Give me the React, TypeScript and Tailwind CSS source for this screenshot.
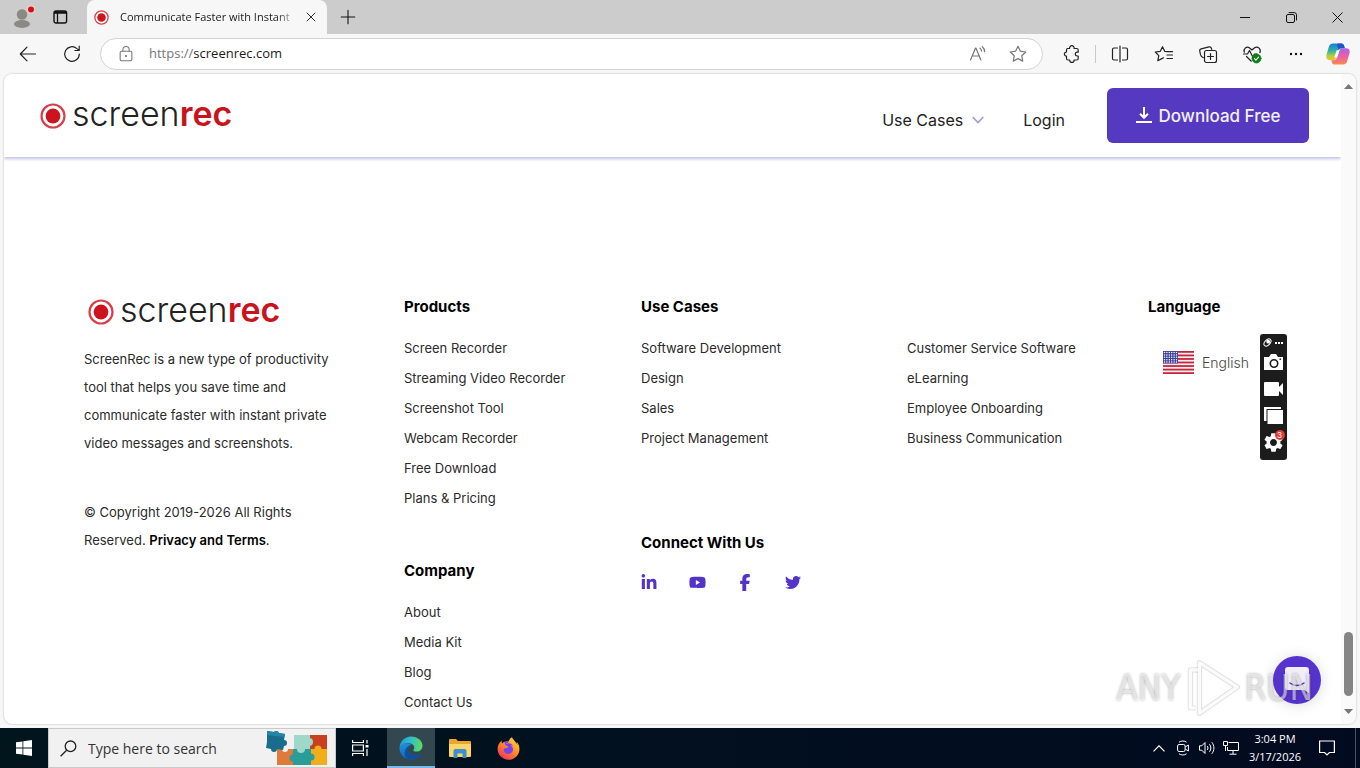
import React from "react";
import {
  FaFacebookF,
  FaFirefoxBrowser,
  FaLinkedinIn,
  FaTwitter,
  FaYoutube,
} from "react-icons/fa6";
import { MdSettings } from "react-icons/md";

type LineIconProps = {
  size?: number;
  className?: string;
  strokeWidth?: number;
  children: React.ReactNode;
};

function LineIcon({ size = 20, className, strokeWidth = 1.2, children }: LineIconProps) {
  return (
    <svg
      width={size}
      height={size}
      viewBox="0 0 20 20"
      fill="none"
      stroke="currentColor"
      strokeWidth={strokeWidth}
      strokeLinecap="round"
      strokeLinejoin="round"
      className={className}
      aria-hidden="true"
    >
      {children}
    </svg>
  );
}

function RecordMark({ size }: { size: number }) {
  return (
    <svg width={size} height={size} viewBox="0 0 26 26" aria-hidden="true">
      <circle cx="13" cy="13" r="11.5" fill="#fff" stroke="#d5404c" strokeWidth="2.200" />
      <circle cx="13" cy="13" r="7.400" fill="#cc141c" />
    </svg>
  );
}

function Logo() {
  return (
    <a href="#home" className="flex items-center gap-[6px]">
      <RecordMark size={26} />
      <span className="text-[34px] leading-[34px] font-light text-[#222] -mt-[4px]">
        screen<span className="font-semibold text-[#c8141d]">rec</span>
      </span>
    </a>
  );
}

function TitleBar() {
  return (
    <div className="flex h-[34px] items-stretch bg-[#cccccc]">
      <div className="flex w-[87px] items-center pl-[12px] gap-[18px]">
        <button aria-label="Profile">
          <svg width="23" height="24" viewBox="0 0 23 24" aria-hidden="true">
            <circle cx="10" cy="9.500" r="5.200" fill="#8b8886" />
            <ellipse cx="10" cy="19" rx="8" ry="3.900" fill="#8b8886" />
            <circle cx="19" cy="4.500" r="4.500" fill="#e6cfcf" />
            <circle cx="19" cy="4.500" r="3" fill="#d90f17" />
          </svg>
        </button>
        <button aria-label="Tab actions">
          <svg width="15" height="14" viewBox="0 0 15 14" fill="none" stroke="#111" aria-hidden="true">
            <rect x="1" y="1" width="12.600" height="12" rx="2" strokeWidth="1.400" />
            <path d="M1 2.500h12.600" strokeWidth="2.500" />
            <path d="M4.500 3v10" strokeWidth="1.300" />
          </svg>
        </button>
      </div>
      <div className="flex w-[240px] items-center rounded-t-lg bg-[#f7f7f7] pl-[7px] pr-[6px]">
        <RecordMark size={15} />
        <span className="ml-[11px] w-[178px] whitespace-nowrap text-[11px] text-[#1b1b1b] [mask-image:linear-gradient(to_right,black_88%,transparent)]">
          Communicate Faster with Instant
        </span>
        <button aria-label="Close tab" className="ml-[3px] flex size-[20px] items-center justify-center text-[#222]">
          <LineIcon size={16}>
            <path d="M5 5l10 10M15 5L5 15" />
          </LineIcon>
        </button>
      </div>
      <button aria-label="New tab" className="flex w-[42px] items-center justify-center text-[#111]">
        <LineIcon size={18}>
          <path d="M10 2.500v15M2.500 10h15" />
        </LineIcon>
      </button>
      <div className="flex-1" />
      <div className="flex text-[#111]">
        <button aria-label="Minimize" className="flex w-[46px] items-center justify-center">
          <svg width="10" height="10" viewBox="0 0 10 10" stroke="currentColor" aria-hidden="true">
            <path d="M0 5.500h10" />
          </svg>
        </button>
        <button aria-label="Restore" className="flex w-[46px] items-center justify-center">
          <svg width="11" height="11" viewBox="0 0 11 11" fill="none" stroke="currentColor" aria-hidden="true">
            <rect x="0.5" y="2.5" width="8" height="8" rx="1.500" />
            <path d="M2.700.6h5.600A2.200 2.200 0 0 1 10.500 2.800v5.600" />
          </svg>
        </button>
        <button aria-label="Close window" className="flex w-[46px] items-center justify-center">
          <svg width="11" height="11" viewBox="0 0 11 11" stroke="currentColor" aria-hidden="true">
            <path d="M.5.5l10 10M10.500 .5l-10 10" />
          </svg>
        </button>
      </div>
    </div>
  );
}

function ToolButton({ label, children }: { label: string; children: React.ReactNode }) {
  return (
    <button aria-label={label} className="flex h-full w-[44px] items-center justify-center text-[#222]">
      {children}
    </button>
  );
}

function CopilotIcon() {
  return (
    <svg width="24" height="22" viewBox="0 0 24 22" aria-hidden="true">
      <defs>
        <linearGradient id="cpA" x1="0" y1="0" x2="0" y2="1">
          <stop offset="0" stopColor="#1a7be0" />
          <stop offset="0.45" stopColor="#2fb6a0" />
          <stop offset="0.75" stopColor="#b7cf3a" />
          <stop offset="1" stopColor="#f6c12b" />
        </linearGradient>
        <linearGradient id="cpB" x1="0" y1="0" x2="0" y2="1">
          <stop offset="0" stopColor="#a763e8" />
          <stop offset="0.5" stopColor="#ea5fa8" />
          <stop offset="1" stopColor="#fb8a4c" />
        </linearGradient>
      </defs>
      <path d="M7 .5h8.500c1.500 0 2.200 1 2.700 2.600l.5 2.100h-3.200c-1.800 0-2.700 1-3.200 2.600L9.900 15c-.4 1.500-1 2.200-2.200 2.200H4C.8 17.200-.3 15 .6 11.500L2.700 4.300C3.400 1.800 4.700.5 7 .5z" fill="url(#cpA)" />
      <path d="M12.200.5h3.300c1.500 0 2.200 1 2.700 2.600l.6 2.100h-3.300c-1.400 0-2.200.7-2.700 1.700L11.200 2.700C11 1.500 11.300.5 12.200.5z" fill="#1c55c8" />
      <path d="M17 21.500H8.500c-1.500 0-2.200-1-2.700-2.600l-.5-1.700h2.400c1.800 0 2.700-1 3.200-2.600L13.500 7.400c.4-1.500 1-2.200 2.200-2.200H20c3.200 0 4.300 2 3.400 5.300l-2.100 7.200c-.7 2.500-2 3.800-4.300 3.800z" fill="url(#cpB)" />
      <path d="M10.600 7.200h2.900l-2.300 7.400H8.300z" fill="#fff" />
    </svg>
  );
}

function Toolbar() {
  return (
    <div className="flex h-[40px] items-center bg-[#f7f7f7] pl-[6px]">
      <ToolButton label="Back">
        <LineIcon size={20}>
          <path d="M17.500 10H2.500M9 3.200L2.300 10 9 16.800" />
        </LineIcon>
      </ToolButton>
      <ToolButton label="Refresh">
        <LineIcon size={20}>
          <path d="M17.300 10a7.300 7.300 0 1 1-2.400-5.400L17 6.400M17.200 2.200v4.300h-4.300" />
        </LineIcon>
      </ToolButton>
      <div className="ml-[6px] flex h-[32px] flex-1 items-center rounded-full border border-[#d3d3d3] bg-white pl-[16px] pr-[14px] text-[#777]">
        <LineIcon size={18}>
          <rect x="3.500" y="7" width="13" height="10.500" rx="1.600" />
          <path d="M6.500 7V5.200a3.500 3.500 0 0 1 7 0V7" />
          <circle cx="10" cy="12.200" r=".6" fill="currentColor" />
        </LineIcon>
        <label htmlFor="address" className="ml-[14px] text-[13px] text-[#777]">
          https://
        </label>
        <input
          id="address"
          defaultValue="screenrec.com"
          className="min-w-0 flex-1 bg-transparent text-[13px] text-[#1b1b1b] outline-none"
        />
        <button aria-label="Read aloud" className="mr-[20px]">
          <LineIcon size={20} strokeWidth={1.2}>
            <path d="M2.500 16L7.500 4h.4l5 12M4.300 12h6.800M12 4.200c1 .7 1.500 1.700 1.700 3M14.300 2.700c1.400 1.200 2.200 2.800 2.400 4.900" />
          </LineIcon>
        </button>
        <button aria-label="Add to favorites">
          <LineIcon size={20}>
            <path d="M10 2.300l2.400 4.900 5.300.8-3.900 3.800.9 5.300-4.700-2.500-4.700 2.500.9-5.300L2.300 8l5.300-.8z" />
          </LineIcon>
        </button>
      </div>
      <div className="ml-[7px] flex h-full items-center">
        <ToolButton label="Extensions">
          <LineIcon size={20}>
            <path d="M5.500 4.500h2.100a2.300 2.300 0 1 1 4.500 0h2.600A1.500 1.500 0 0 1 16.200 6v2.200h-1a1.900 1.900 0 1 0 0 3.800h1v2.500a1.500 1.500 0 0 1-1.500 1.500h-2.600v.2a2.200 2.200 0 0 1-4.400 0V16H6a1.500 1.500 0 0 1-1.500-1.500v-2.300a2.100 2.100 0 1 1 0-4.200V6a1.500 1.500 0 0 1 1-1.500z" />
          </LineIcon>
        </ToolButton>
        <div className="mx-[1px] h-[18px] w-[2px] border-l border-[#c8c8c8]" />
        <ToolButton label="Split screen">
          <LineIcon size={20}>
            <path d="M10 2v16M7.500 4H4a1.500 1.500 0 0 0-1.500 1.500v9A1.500 1.500 0 0 0 4 16h3.500M12.500 4H16a1.500 1.500 0 0 1 1.500 1.500v9A1.500 1.500 0 0 1 16 16h-3.500" />
          </LineIcon>
        </ToolButton>
        <ToolButton label="Favorites">
          <LineIcon size={20}>
            <path d="M9.500 13.800l-1.200.6-4.500 2.300 1-5L1.300 8l5-.7 2.200-4.600 2.200 4.600 3.300.4M13 7.700h5.500M13 11h5.500M13 14.500h5.500" />
          </LineIcon>
        </ToolButton>
        <ToolButton label="Collections">
          <LineIcon size={20}>
            <path d="M5.200 13.600l-.7-.4C3.300 12.700 3 12 2.600 10.900L1.800 7.300C1.500 6 2 5.200 3.200 4.900l7.800-2c1.300-.3 2 .1 2.400 1.400l.3 1" />
            <rect x="6.500" y="6.500" width="12" height="12" rx="2" />
            <path d="M12.500 9.500v6M9.500 12.500h6" />
          </LineIcon>
        </ToolButton>
        <ToolButton label="Browser essentials">
          <LineIcon size={20}>
            <path d="M2.300 8.200C1.200 4.600 4.600 2.300 7.300 3.700L10 6l2.600-2.300c3.500-1.600 6.700 1.200 5.300 5M4.500 12.500l4.800 4.700M1.500 10h4l2-3.500 3.300 6.500 1.700-3h2.500" />
            <circle cx="14.500" cy="14.500" r="4.500" fill="#0b8015" stroke="#0b8015" strokeWidth=".8" />
            <path d="M12.500 14.700l1.400 1.400 2.700-2.900" stroke="#fff" />
          </LineIcon>
        </ToolButton>
        <ToolButton label="More">
          <svg width="14" height="4" viewBox="0 0 14 4" fill="#111" aria-hidden="true">
            <circle cx="2" cy="2" r="1.200" />
            <circle cx="7" cy="2" r="1.200" />
            <circle cx="12" cy="2" r="1.200" />
          </svg>
        </ToolButton>
        <button aria-label="Copilot" className="flex w-[42px] items-center justify-center pr-[2px]">
          <CopilotIcon />
        </button>
      </div>
    </div>
  );
}

function SiteHeader() {
  return (
    <header className="flex h-[83px] shrink-0 items-center justify-between bg-white pl-[36px] pr-[32px] shadow-[0_2px_3px_rgba(83,76,190,0.35)]">
      <Logo />
      <nav className="flex items-center text-[16px] text-[#222]">
        <button className="flex items-center gap-[9px] pt-[8px]">
          Use Cases
          <svg width="12" height="8" viewBox="0 0 12 8" fill="none" stroke="#a79be6" strokeWidth="1.800" aria-hidden="true">
            <path d="M.7 1L6 6.500 11.300 1" />
          </svg>
        </button>
        <a href="#login" className="ml-[39px] pt-[8px]">
          Login
        </a>
        <a
          href="#download"
          className="ml-[42px] flex h-[55px] w-[202px] items-center justify-center gap-[7px] rounded-md bg-[#553ac1] pt-[2px] text-[17px] font-medium text-[#f4f0ff]"
        >
          <svg width="16" height="20" viewBox="0 0 16 20" fill="none" stroke="#fff" strokeWidth="2" aria-hidden="true">
            <path d="M8 0v10.500M4 6.800l4 4 4-4M0 15h16" />
          </svg>
          Download Free
        </a>
      </nav>
    </header>
  );
}

function LinkList({ items }: { items: string[] }) {
  return (
    <ul className="mt-[14px] leading-[30px]">
      {items.map((item) => (
        <li key={item}>
          <a href="#page" className="whitespace-nowrap">
            {item}
          </a>
        </li>
      ))}
    </ul>
  );
}

function Heading({ children }: { children: React.ReactNode }) {
  return <h2 className="h-[24px] text-[15px] leading-[24px] font-bold text-black">{children}</h2>;
}

function UsFlag() {
  const stripes = [0, 1, 2, 3, 4, 5, 6];
  const rows = [0, 1, 2, 3, 4];
  const cols = [0, 1, 2, 3, 4, 5];
  return (
    <svg width="31" height="23" viewBox="0 0 31 23" aria-hidden="true">
      <rect width="31" height="23" fill="#f6eeee" />
      {stripes.map((i) => (
        <rect key={i} y={(i * 23 * 2) / 13} width="31" height={23 / 13} fill="#c4243c" />
      ))}
      <rect width="15" height="12.400" fill="#36409a" />
      {rows.map((r) =>
        cols.map((c) => <circle key={`${r}-${c}`} cx={1.5 + c * 2.4} cy={1.5 + r * 2.4} r=".75" fill="#fff" />),
      )}
    </svg>
  );
}

function SiteFooter() {
  return (
    <footer className="grid grid-cols-[320fr_237fr_507fr_193fr] pl-[80px] pt-[138px] text-[13px] text-[#2b2b2b]">
      <div className="pr-[60px]">
        <div className="h-[36px] pl-[4px] pt-[2px]">
          <Logo />
        </div>
        <p className="mt-[14px] leading-[28px]">
          ScreenRec is a new type of productivity
          <br />
          tool that helps you save time and
          <br />
          communicate faster with instant private
          <br />
          video messages and screenshots.
        </p>
        <p className="mt-[41px] leading-[28px]">
          © Copyright 2019-2026 All Rights
          <br />
          Reserved.{" "}
          <a href="#privacy" className="font-semibold text-black">
            Privacy and Terms
          </a>
          .
        </p>
      </div>
      <div>
        <Heading>Products</Heading>
        <LinkList
          items={[
            "Screen Recorder",
            "Streaming Video Recorder",
            "Screenshot Tool",
            "Webcam Recorder",
            "Free Download",
            "Plans & Pricing",
          ]}
        />
        <div className="mt-[46px]">
          <Heading>Company</Heading>
          <LinkList items={["About", "Media Kit", "Blog", "Contact Us"]} />
        </div>
      </div>
      <div>
        <Heading>Use Cases</Heading>
        <div className="grid grid-cols-[266fr_241fr]">
          <LinkList items={["Software Development", "Design", "Sales", "Project Management"]} />
          <LinkList
            items={["Customer Service Software", "eLearning", "Employee Onboarding", "Business Communication"]}
          />
        </div>
        <div className="mt-[78px]">
          <Heading>Connect With Us</Heading>
          <div className="mt-[19px] flex gap-[32px] text-[#5433c8]">
            <a href="#linkedin" aria-label="LinkedIn" className="flex w-[16px] justify-center">
              <FaLinkedinIn size={17} />
            </a>
            <a href="#youtube" aria-label="YouTube" className="flex w-[16px] justify-center">
              <FaYoutube size={17} className="shrink-0" />
            </a>
            <a href="#facebook" aria-label="Facebook" className="flex w-[16px] justify-center">
              <FaFacebookF size={17} />
            </a>
            <a href="#twitter" aria-label="Twitter" className="flex w-[16px] justify-center">
              <FaTwitter size={17} />
            </a>
          </div>
        </div>
      </div>
      <div>
        <Heading>Language</Heading>
        <button className="mt-[32px] flex items-center gap-[8px] pl-[15px] text-[14px] font-light text-[#444]">
          <UsFlag />
          English
        </button>
      </div>
    </footer>
  );
}

function RecorderWidget() {
  return (
    <div className="absolute top-[260px] right-[69px] flex w-[27px] flex-col items-center rounded-[3px] bg-[#1c1c1c] pr-px pb-[7px] text-white">
      <div className="flex h-[17px] items-center gap-[3px]">
        <svg width="9" height="9" viewBox="0 0 9 9" fill="none" stroke="#fff" aria-hidden="true">
          <ellipse cx="4.500" cy="4.500" rx="4.200" ry="2.600" transform="rotate(-45 4.500 4.500)" />
          <circle cx="5.200" cy="3.700" r="1.900" fill="#fff" stroke="none" />
        </svg>
        <svg width="8" height="2" viewBox="0 0 8 2" fill="#fff" aria-hidden="true">
          <path d="M0 0h2v2H0zM3 0h2v2H3zM6 0h2v2H6z" />
        </svg>
      </div>
      <button aria-label="Take screenshot" className="flex h-[27px] items-start pt-[3px]">
        <svg width="19" height="16" viewBox="0 0 19 16" aria-hidden="true">
          <path d="M0 3h5l2-3h5l2 3h5v13H0z" fill="#fff" />
          <circle cx="10" cy="9.500" r="3.700" fill="#fff" stroke="#1c1c1c" strokeWidth="1.600" />
          <rect x="15.500" y="4.500" width="1.600" height="1.400" fill="#1c1c1c" />
        </svg>
      </button>
      <button aria-label="Record video" className="flex h-[27px] items-start pt-[4px]">
        <svg width="19" height="14" viewBox="0 0 19 14" fill="#fff" aria-hidden="true">
          <path d="M1 0h13a1 1 0 0 1 1 1v4l4-4v12l-4-4v4a1 1 0 0 1-1 1H1a1 1 0 0 1-1-1V1a1 1 0 0 1 1-1z" />
        </svg>
      </button>
      <button aria-label="Gallery" className="flex h-[26px] items-start pt-[2px]">
        <svg width="19" height="17" viewBox="0 0 19 17" aria-hidden="true">
          <path d="M0 0h17v2H2.500v12H0z" fill="#fff" />
          <rect x="3.500" y="3" width="15.500" height="14" fill="#fff" />
        </svg>
      </button>
      <button aria-label="Settings, 3 new" className="relative flex h-[22px] items-center">
        <MdSettings size={23} />
        <span className="absolute -top-[1px] left-[13px] flex size-[10px] items-center justify-center rounded-full bg-[#e33a34] text-[8px] leading-none">
          3
        </span>
      </button>
    </div>
  );
}

function ChatLauncher() {
  return (
    <button
      aria-label="Open chat"
      className="absolute right-[35px] bottom-[20px] flex size-[48px] items-center justify-center rounded-full bg-[#5533cc] shadow-[0_1px_14px_rgba(0,0,0,0.15)]"
    >
      <svg width="24" height="27" viewBox="0 0 24 27" aria-hidden="true">
        <path d="M3 0h18a3 3 0 0 1 3 3v23l-5-3H3a3 3 0 0 1-3-3V3a3 3 0 0 1 3-3z" fill="#f1eefa" />
        <path d="M5 16c4 3.200 10 3.200 14 0" fill="none" stroke="#5533cc" strokeWidth="1.500" strokeLinecap="round" />
      </svg>
    </button>
  );
}

function Watermark() {
  return (
    <div className="pointer-events-none absolute right-[43px] bottom-[4px] flex items-center font-['DejaVu_Sans_Condensed',sans-serif] text-[35px] leading-[60px] text-white/55 [text-shadow:0_0_3px_rgba(0,0,0,0.35)]">
      <span>ANY</span>
      <svg width="56" height="64" viewBox="0 0 62 64" fill="none" strokeLinejoin="round" className="mx-[4px]" aria-hidden="true">
        <g stroke="#000" strokeOpacity=".11" strokeWidth="6">
          <path d="M16 4l42 27-42 29z" />
          <path d="M16 12H6v42h6" />
        </g>
        <g stroke="#fff" strokeOpacity=".85" strokeWidth="3.500">
          <path d="M16 4l42 27-42 29z" />
          <path d="M16 12H6v42h6" />
        </g>
      </svg>
      <span>RUN</span>
    </div>
  );
}

function ScrollBar() {
  return (
    <div className="flex w-[15px] shrink-0 flex-col items-center bg-[#fafafa] pt-[10px] pr-px pb-[10px]" aria-hidden="true">
      <svg width="9" height="5" viewBox="0 0 9 5" fill="#777">
        <path d="M4.500 0L9 5H0z" />
      </svg>
      <div className="flex-1" />
      <div className="mb-[13px] h-[64px] w-[9px] rounded-full bg-[#858585]" />
      <svg width="9" height="5" viewBox="0 0 9 5" fill="#777">
        <path d="M4.500 5L9 0H0z" />
      </svg>
    </div>
  );
}

function PuzzleArt() {
  return (
    <svg width="64" height="38" viewBox="0 0 64 38" aria-hidden="true">
      <path d="M29 6h16v15H29z" fill="#9ed8ca" />
      <path d="M45 6h17v15H45z" fill="#c9401f" />
      <path d="M12 20h17v16H12z" fill="#e07a3a" />
      <path d="M28 20h18v16H28z" fill="#2a9d98" />
      <path d="M46 20h16v16H46z" fill="#f0ad1c" />
      <circle cx="44" cy="13" r="4" fill="#9ed8ca" />
      <circle cx="36" cy="20" r="4" fill="#9ed8ca" />
      <circle cx="28" cy="29" r="3.500" fill="#2a9d98" />
      <circle cx="53" cy="20" r="3.500" fill="#f0ad1c" />
      <circle cx="46" cy="28" r="3.500" fill="#2a9d98" />
      <circle cx="20" cy="20" r="3" fill="#f1f1f1" />
      <path d="M2 2l7 1a3 3 0 0 1 5 1l6 1-1 6a3 3 0 1 1 0 6l-1 4-6-1a3 3 0 1 1-6 0l-5-1 1-6z" fill="#1a6c8c" />
      <path d="M2 2l7 1a3 3 0 0 1 5 1l6 1-.5 3L2 6z" fill="#2486a4" />
    </svg>
  );
}

function EdgeIcon() {
  return (
    <svg width="24" height="24" viewBox="0 0 24 24" aria-hidden="true">
      <defs>
        <linearGradient id="edgeWave" x1="0" y1="0.4" x2="1" y2="0.5">
          <stop offset="0" stopColor="#1e9de3" />
          <stop offset="0.5" stopColor="#31c1c4" />
          <stop offset="1" stopColor="#63d95c" />
        </linearGradient>
        <linearGradient id="edgeBody" x1="0" y1="0" x2="0.4" y2="1">
          <stop offset="0" stopColor="#1f94e0" />
          <stop offset="1" stopColor="#0f63bd" />
        </linearGradient>
      </defs>
      <path d="M.5 12.500C1 9 4.800 7 9 7.300c1.300.1 2.500.6 3.500 1.500-2.500.7-3.700 2.500-3.700 4.700 0 3.600 3.400 6 7 6 2 0 3.700-.5 5-1.200.6-.3 1 .1.700.6-2 2.900-5.500 4.600-9.500 4.600C5.800 23.500.8 18.600.5 12.500z" fill="url(#edgeBody)" />
      <path d="M8.800 23C4.500 20.500 3.800 11.500 12.500 8.800c-2.500 1.500-3.700 3-3.700 5 0 3.500 3.400 5.700 7 5.700 2 0 3.700-.5 5-1.200.6-.3 1 .1.700.6-2 2.900-5.500 4.600-9.500 4.600-1.200 0-2.300-.2-3.200-.5z" fill="#0c4f9e" />
      <path d="M.5 12C.7 5.500 5.700.5 12 .5c6.700 0 11.500 4.400 11.500 9.300 0 3.700-2.900 5.800-5.900 5.800-2.200 0-3.300-.7-3.300-1.400 0-.6 1-1 1-2.600 0-2.300-2.400-4.700-6.200-4.700C4.900 6.900 1.400 9 .5 12z" fill="url(#edgeWave)" />
    </svg>
  );
}

function TrayIcon({ label, children }: { label: string; children: React.ReactNode }) {
  return (
    <button aria-label={label} className="flex h-full w-[24px] items-center justify-center text-white">
      {children}
    </button>
  );
}

function Taskbar() {
  return (
    <div className="flex h-[40px] shrink-0 items-stretch bg-linear-to-r from-[#01151d] to-[#020a20] text-white">
      <svg width="0" height="0" className="absolute" aria-hidden="true">
        <defs>
          <linearGradient id="foxFill" x1="0.9" y1="0" x2="0.2" y2="1">
            <stop offset="0" stopColor="#ffe04a" />
            <stop offset="0.45" stopColor="#ff9321" />
            <stop offset="1" stopColor="#ef2f5c" />
          </linearGradient>
        </defs>
      </svg>
      <button aria-label="Start" className="flex w-[48px] items-center justify-center">
        <svg width="16" height="16" viewBox="0 0 16 16" fill="#fff" aria-hidden="true">
          <path d="M0 2.300L6.500 1.400v6.200H0zM7.300 1.300L16 0v7.600H7.300zM0 8.400h6.500v6.200L0 13.700zM7.300 8.400H16V16l-8.700-1.300z" />
        </svg>
      </button>
      <div className="flex w-[288px] items-center border border-[#c9c9c9] bg-[#f1f1f1] pl-[11px] pr-[6px] text-[#222]">
        <svg width="17" height="17" viewBox="0 0 17 17" fill="none" stroke="#222" strokeWidth="1.300" aria-hidden="true">
          <circle cx="10.500" cy="6.300" r="5.300" />
          <path d="M6.600 10.200L.6 16.200" />
        </svg>
        <input
          aria-label="Search"
          placeholder="Type here to search"
          className="ml-[11px] min-w-0 flex-1 bg-transparent text-[14px] outline-none placeholder:text-[#333]"
        />
        <PuzzleArt />
      </div>
      <button aria-label="Task view" className="flex w-[51px] items-center justify-center pr-[2px]">
        <svg width="17" height="16" viewBox="0 0 17 16" fill="none" stroke="#fff" strokeWidth="1.200" aria-hidden="true">
          <path d="M.6 0v2.500h10.800V0M.6 16v-2.500h10.800V16M.6 5h10.800v6H.6zM15 0v3.500M15 9v7" />
          <path d="M13.500 5h3v2.500h-3z" fill="#fff" stroke="none" />
        </svg>
      </button>
      <button
        aria-label="Microsoft Edge"
        className="flex w-[48px] items-center justify-center border-b-2 border-[#76b9ed] bg-[#33474f] pt-[2px]"
      >
        <EdgeIcon />
      </button>
      <button aria-label="File Explorer" className="flex w-[49px] items-center justify-center">
        <svg width="22" height="19" viewBox="0 0 22 19" aria-hidden="true">
          <path d="M0 1a1 1 0 0 1 1-1h6l2 2h12a1 1 0 0 1 1 1v4H0z" fill="#e9a72c" />
          <path d="M0 5h22v12a1 1 0 0 1-1 1H1a1 1 0 0 1-1-1z" fill="#fbd667" />
          <path d="M4.500 19v-7a2 2 0 0 1 2-2h9a2 2 0 0 1 2 2v7h-4v-4.500h-5V19z" fill="#3c8fd0" />
        </svg>
      </button>
      <button aria-label="Firefox" className="flex w-[49px] items-center justify-center">
        <span className="flex size-[23px] items-center justify-center rounded-full bg-[radial-gradient(circle,#7b3ff2_45%,transparent_50%)]">
          <FaFirefoxBrowser size={23} fill="url(#foxFill)" />
        </span>
      </button>
      <div className="flex-1" />
      <TrayIcon label="Show hidden icons">
        <svg width="12" height="7" viewBox="0 0 12 7" fill="none" stroke="currentColor" strokeWidth="1.200" aria-hidden="true">
          <path d="M.5 6.300L6 .8l5.500 5.500" />
        </svg>
      </TrayIcon>
      <TrayIcon label="Meet now">
        <svg width="12" height="16" viewBox="0 0 12 16" fill="none" stroke="currentColor" aria-hidden="true">
          <rect x=".6" y="4.500" width="7.500" height="7" rx="1.500" />
          <path d="M8.200 7l3.200-2v6L8.200 9M2 2.200C4 .6 7.500.6 9.500 2.200M2 13.800c2 1.600 5.500 1.600 7.500 0" />
        </svg>
      </TrayIcon>
      <TrayIcon label="Volume">
        <svg width="16" height="14" viewBox="0 0 16 14" fill="none" stroke="currentColor" aria-hidden="true">
          <path d="M.5 4.800h2.300L6 1.500v11L2.800 9.200H.5zM8.300 5c.9 1.200.9 2.800 0 4M10.500 3.200c1.800 2.300 1.800 5.300 0 7.600M12.800 1.200c2.800 3.500 2.800 8.100 0 11.600" />
        </svg>
      </TrayIcon>
      <TrayIcon label="Network">
        <svg width="16" height="14" viewBox="0 0 16 14" fill="none" stroke="currentColor" aria-hidden="true">
          <path d="M5.500 1.500h10v8h-11V6M10 9.500v3.500M6.500 13.200h7M.5.5h4v4h-4zM2.500 4.500V10" />
        </svg>
      </TrayIcon>
      <div className="flex w-[64px] flex-col items-center justify-center text-[11px] leading-[18px]">
        <span>3:04 PM</span>
        <span>3/17/2026</span>
      </div>
      <button aria-label="Notifications" className="flex w-[49px] items-center justify-center border-r border-[#4b5361] pr-[8px]">
        <svg width="16" height="16" viewBox="0 0 16 16" fill="none" stroke="#fff" strokeWidth="1.200" aria-hidden="true">
          <path d="M.6 1h14.800v11.500h-5L8 15l-2.400-2.500h-5z" />
        </svg>
      </button>
      <div className="w-[4px]" />
    </div>
  );
}

export default function App() {
  return (
    <div className="flex h-screen flex-col bg-[#f7f7f7] font-['Open_Sans',sans-serif]">
      <TitleBar />
      <Toolbar />
      <div className="relative mx-[4px] mb-[4px] flex min-h-0 flex-1 overflow-hidden rounded-lg bg-white font-['Inter',sans-serif] shadow-[0_0_2px_rgba(0,0,0,0.3)]">
        <div className="flex min-w-0 flex-1 flex-col overflow-hidden">
          <SiteHeader />
          <SiteFooter />
        </div>
        <ScrollBar />
        <RecorderWidget />
        <ChatLauncher />
        <Watermark />
      </div>
      <Taskbar />
    </div>
  );
}
